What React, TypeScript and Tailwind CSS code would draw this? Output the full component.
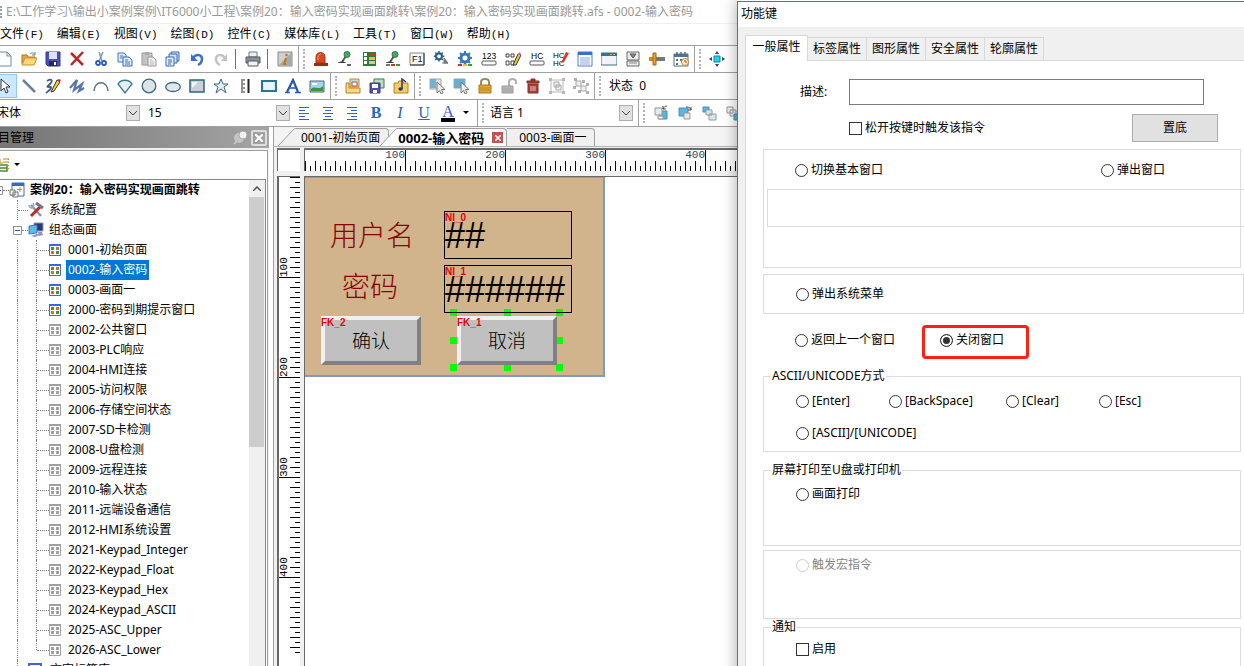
import type { ReactNode } from 'react';
import clsx from 'clsx';

const menus = [
  ['文件', 'F'],
  ['编辑', 'E'],
  ['视图', 'V'],
  ['绘图', 'D'],
  ['控件', 'C'],
  ['媒体库', 'L'],
  ['工具', 'T'],
  ['窗口', 'W'],
  ['帮助', 'H'],
];

const pages = [
  '0001-初始页面',
  '0002-输入密码',
  '0003-画面一',
  '2000-密码到期提示窗口',
  '2002-公共窗口',
  '2003-PLC响应',
  '2004-HMI连接',
  '2005-访问权限',
  '2006-存储空间状态',
  '2007-SD卡检测',
  '2008-U盘检测',
  '2009-远程连接',
  '2010-输入状态',
  '2011-远端设备通信',
  '2012-HMI系统设置',
  '2021-Keypad_Integer',
  '2022-Keypad_Float',
  '2023-Keypad_Hex',
  '2024-Keypad_ASCII',
  '2025-ASC_Upper',
  '2026-ASC_Lower',
];

const gear = (color: string) => (
  <>
    <circle cx="8" cy="7" r="4" fill="none" stroke={color} strokeWidth="3" />
    <path d="M8 0v3M8 11v3M1 7h3M12 7h3M3 2l2 2M11 10l2 2M13 2l-2 2M5 10l-2 2" stroke={color} strokeWidth="2" />
  </>
);

const lamps = (
  <>
    <path d="M1 14h4" stroke="#c83232" strokeWidth="2" />
    <path d="M6 14h4" stroke="#e8b830" strokeWidth="2" />
    <path d="M11 14h4" stroke="#3a9a3a" strokeWidth="2" />
  </>
);

const lever = (
  <>
    <path d="M9 5 5 11" stroke="#555" strokeWidth="2" />
    <circle cx="10" cy="3.500" r="3" fill="#4aa860" stroke="#2c7a40" />
    <path d="M1 12c0-2 8-2 8 0z" fill="#444" />
  </>
);

const arrowCursor = <path d="M8 4v11l2.500-2.500 1.500 3.500 2-1-1.500-3.500H16z" fill="#eee" stroke="#777" />;

const icons: Record<string, ReactNode> = {
  new: <path d="M2 1h8l4 4v10H2zM10 1v4h4" fill="#fff" stroke="#6a8aa8" />,
  open: (
    <>
      <path d="M1 13V4h5l1 2h7v3" fill="#e8a840" stroke="#a87820" />
      <path d="m1 14 3-7h12l-3 7z" fill="#fcd878" stroke="#c89030" />
      <path d="M9 3c2-2 4-1 5 1m0-3v3h-3" fill="none" stroke="#5a8a9a" />
    </>
  ),
  save: (
    <>
      <path d="M1 1h14v14H3l-2-2z" fill="#4a50b8" stroke="#343a90" />
      <path d="M4 1h8v7H4z" fill="#dce4f8" />
      <path d="M4 10h8v5H4z" fill="#222860" />
      <path d="M9 11h2v3H9z" fill="#fff" />
    </>
  ),
  remove: <path d="m2 2 12 12M14 1 2 14" stroke="#b82828" strokeWidth="2.500" />,
  cut: (
    <>
      <path d="m6 1 3 9M10 1 6 10" stroke="#7a98b8" strokeWidth="1.500" />
      <circle cx="5" cy="12" r="2" fill="none" stroke="#2858c0" strokeWidth="1.800" />
      <circle cx="11" cy="12" r="2" fill="none" stroke="#2858c0" strokeWidth="1.800" />
    </>
  ),
  copy: (
    <>
      <path d="M1 2h6l2 2v7H1z" fill="#dceafa" stroke="#4878b8" />
      <path d="M6 6h6l3 3v6H6z" fill="#dceafa" stroke="#3868b0" />
      <path d="M3 5h3M3 7h2M8 9h3M8 11h5M8 13h5" stroke="#4878b8" />
    </>
  ),
  paste: (
    <>
      <path d="M1 2h10v12H1z" fill="#c4c4c4" stroke="#999" />
      <path d="M4 1h4v3H4z" fill="#aaa" />
      <path d="M7 6h5l3 3v6H7z" fill="#eee" stroke="#999" />
      <path d="M9 9h2M9 11h4M9 13h4" stroke="#bbb" />
    </>
  ),
  copies: (
    <>
      <path d="M6 1h8v9H6z" fill="#cfe0f6" stroke="#3868b0" />
      <path d="M4 3h8v9H4z" fill="#cfe0f6" stroke="#3868b0" />
      <path d="M1 6h8v9H1z" fill="#e4effc" stroke="#3868b0" />
      <path d="M3 9h4M3 11h4M3 13h3" stroke="#3868b0" />
    </>
  ),
  undo: (
    <>
      <path d="M4 7c3-4 9-4 9 1 0 3-2 5-4 6" fill="none" stroke="#3a6ec8" strokeWidth="2.500" />
      <path d="M2 3v7h7z" fill="#3a6ec8" />
    </>
  ),
  redo: (
    <>
      <path d="M12 7c-3-4-9-4-9 1 0 3 2 5 4 6" fill="none" stroke="#c4c4c4" strokeWidth="2.500" />
      <path d="M14 3v7H8z" fill="#c4c4c4" />
    </>
  ),
  print: (
    <>
      <path d="M4 1h8v5H4z" fill="#e6f0f6" stroke="#778" />
      <path d="M1 6h14v6H1z" fill="#8a9098" stroke="#555a60" />
      <path d="M3 10h10v5H3z" fill="#f2f2f2" stroke="#555a60" />
    </>
  ),
  info: (
    <>
      <path d="M1 1h14v14H1z" fill="#d0d0d0" stroke="#888" />
      <path d="m2 14 12-12v12z" fill="#a8a8a8" />
      <path d="M9 7 7 13h2" fill="none" stroke="#c87810" strokeWidth="2" />
      <circle cx="9.500" cy="4" r="1.300" fill="#c87810" />
    </>
  ),
  alarm: (
    <>
      <path d="M3 12V6c0-6 9-6 9 0v6z" fill="#d84820" stroke="#b03010" />
      <path d="M5 9V6c0-2 2-3 3-3" fill="none" stroke="#f8a080" />
      <path d="M1 12h14v3H1z" fill="#903018" />
    </>
  ),
  lever: (
    <>
      {lever}
      <path d="M10 14h4" stroke="#666" strokeWidth="2" />
    </>
  ),
  table: (
    <>
      <path d="M2 1h13v14H2z" fill="#2e7a38" />
      <path d="M3 2h3v3H3zM3 6h3v3H3zM3 10h3v3H3z" fill="#fff" />
      <path d="M8 2h6v3H8z" fill="#d83020" />
      <path d="M8 6h6v3H8z" fill="#f0c030" />
      <path d="M8 10h6v3H8z" fill="#d8c8a0" />
    </>
  ),
  levers: (
    <>
      {lever}
      <path d="M11 14h4" stroke="#3a9a3a" strokeWidth="2" />
      <path d="M6 14h4" stroke="#c83232" strokeWidth="2" />
      <path d="M1 14h4" stroke="#777" strokeWidth="2" />
    </>
  ),
  f1: (
    <>
      <path d="M1 2h14v12H1z" fill="#f6f6f6" stroke="#888" />
      <path d="M1 14h14V2" fill="none" stroke="#333" />
      <text x="3" y="11" fontSize="9" fill="#111">F1</text>
    </>
  ),
  gearStep: (
    <>
      <g transform="scale(.75)">{gear('#2f628e')}</g>
      <path d="M11 7v5h4zM9 12h6" fill="#777" stroke="#777" />
    </>
  ),
  gearLamps: (
    <>
      {gear('#3a78b8')}
      {lamps}
    </>
  ),
  digits: (
    <>
      <text x="1" y="8" fontSize="8.500" fill="#000">123</text>
      <rect x="1" y="10" width="14" height="4" rx="1" fill="#fff" stroke="#555" />
    </>
  ),
  digitsPen: (
    <>
      <path d="M1 3h3v3H1zM6 3h3v3H6zM1 10h3v4H1zM6 10h3v4H6z" fill="#fff" stroke="#444" />
      <path d="m8 14 5-11 3 1-5 10z" fill="#f0d020" stroke="#333" />
      <path d="m12 4 3-3 1 3z" fill="#b868b8" />
    </>
  ),
  hc: (
    <>
      <text x="2" y="8" fontSize="8.500" fill="#000">HC</text>
      <rect x="1" y="10" width="14" height="4" rx="1" fill="#fff" stroke="#555" />
    </>
  ),
  hcPen: (
    <>
      <text x="0" y="7" fontSize="8" fill="#000">HC</text>
      <text x="0" y="15" fontSize="8" fill="#000">HC</text>
      <path d="m8 12 5-11 3 1-5 9z" fill="#d83828" />
    </>
  ),
  list: (
    <>
      <path d="M1 1h14v14H1z" fill="#fff" stroke="#4a80c8" />
      <path d="M1 1h14v3H1z" fill="#3a70c8" />
      <path d="M3 7h10M3 9h10M3 11h10M3 13h10" stroke="#88a8d8" />
    </>
  ),
  window: (
    <>
      <path d="M0 2h16v12H0z" fill="#eef4f8" stroke="#3a7088" />
      <path d="M0 2h16v3H0z" fill="#2d7894" />
      <path d="M9 3h2v1H9zM12 3h2v1h-2z" fill="#f0a040" />
    </>
  ),
  drop: (
    <>
      <path d="M2 1h12v8H2zM2 10h12v5H2z" fill="#eee" stroke="#666" />
      <path d="M5 3h6L8 7z" fill="#888" stroke="#555" />
      <path d="M4 12h8" stroke="#888" />
    </>
  ),
  slider: (
    <>
      <path d="M0 6h16v4H0z" fill="#777" />
      <path d="M0 6h5v4H0z" fill="#d88820" />
      <path d="M4 2h3v12H4z" fill="#e8a030" stroke="#a06810" />
    </>
  ),
  calendar: (
    <>
      <path d="M1 3h14v12H1z" fill="#fff" stroke="#50748c" />
      <path d="M1 3h14v3H1z" fill="#50748c" />
      <path d="M4 1v3M8 1v3M12 1v3" stroke="#50748c" strokeWidth="1.500" />
      <path d="M3 8h2v2H3zM7 8h2v2H7zM3 12h2v2H3z" fill="#50748c" />
      <circle cx="12" cy="11" r="3.500" fill="#fce8c8" stroke="#c88830" />
      <path d="M12 9v2h2" fill="none" stroke="#a06020" />
    </>
  ),
  move: (
    <>
      <path d="M5 5h6v6H5z" fill="#18d8e8" stroke="#1878a8" />
      <path d="m8 0 2 3H6zM8 16l2-3H6zM0 8l3-2v4zM16 8l-3-2v4z" fill="#284868" />
    </>
  ),
  group: (
    <>
      <circle cx="8" cy="4" r="4" fill="#48a0d0" />
      <path d="M5 8h6l-1 7H6z" fill="#7848a8" />
    </>
  ),
  pointer: <path d="M4 1v12l3-3 2 5 2-1-2-5h4z" fill="#fff" stroke="#333" />,
  line: <path d="m2 2 12 12" stroke="#6a82a0" strokeWidth="2.500" />,
  freehand: (
    <>
      <path d="M2 3c5-3 6 0 3 3s-4 3 0 3-3 5-4 6" fill="none" stroke="#3f5b86" strokeWidth="1.800" />
      <path d="m6 14 6-12 3 2-6 9z" fill="#f0d828" stroke="#333" />
      <path d="m12 2 2-1 2 1-1 2z" fill="#c83040" />
    </>
  ),
  polyline: <path d="M1 10 8 2 5 12l8-6-3 7 5-3" fill="none" stroke="#5878a8" strokeWidth="2.200" />,
  arc: <path d="M1 13c1-11 13-11 14 0" fill="none" stroke="#5a6e88" strokeWidth="1.500" />,
  pie: <path d="M1 6c3-5 11-5 14 0l-7 9z" fill="#e8eef2" stroke="#3a7890" strokeWidth="1.300" />,
  circle: <circle cx="8" cy="8" r="6.800" fill="#dce4e8" stroke="#3a6a80" strokeWidth="1.300" />,
  ellipse: <ellipse cx="8" cy="9" rx="7.300" ry="4.500" fill="#e0e6ea" stroke="#3a6a80" strokeWidth="1.300" />,
  rect: (
    <>
      <path d="M1 2h14v12H1z" fill="#c8d0d6" stroke="#2e6480" strokeWidth="1.500" />
      <path d="M3 4h6l-6 6z" fill="#f2f4f6" />
    </>
  ),
  star: <path d="m8 1 2 5h5l-4 3 2 6-5-4-5 4 2-6-4-3h5z" fill="#e4ecf0" stroke="#3a6a80" />,
  scale: (
    <>
      <path d="M4 2h4M4 4h2M4 6h4M4 8h2M4 10h4M4 12h2M4 14h4" stroke="#222" />
      <path d="M11.500 1v14" stroke="#222" strokeWidth="2" />
    </>
  ),
  frame: <path d="M1 3h14v10H1z" fill="#e8f4fa" stroke="#2a7498" strokeWidth="2.200" />,
  text: (
    <>
      <path d="m2 14 6-12 5 12" fill="none" stroke="#2858a8" strokeWidth="2.200" />
      <path d="M4 10h7M0 14.500h5M10 14.500h6" stroke="#2858a8" strokeWidth="1.500" />
    </>
  ),
  image: (
    <>
      <path d="M1 3h14v11H1z" fill="#a8d4ee" stroke="#4a6a80" />
      <path d="M2 11c4-4 7 2 12-3v5H2z" fill="#3f9440" />
      <path d="M3 5h5v2H3z" fill="#fff" />
    </>
  ),
  gallery: (
    <>
      <path d="M5 1h9v8H5z" fill="#b8dcf0" stroke="#c88820" />
      <path d="M1 5h3v5h11v5H1z" fill="#f8d880" stroke="#b88020" />
      <path d="M7 4h5v4H7z" fill="#fff" stroke="#c05030" />
    </>
  ),
  gallerySave: (
    <>
      <path d="M5 1h10v9H5z" fill="#b8e0c0" stroke="#3a7a50" />
      <path d="M1 5h10v10H1z" fill="#5050b0" stroke="#383890" />
      <path d="M3 6h6v4H3zM4 12h4v3H4z" fill="#fff" />
    </>
  ),
  music: (
    <>
      <path d="M1 5h4l1-2h4v2h5v10H1z" fill="#f4cc60" stroke="#b88020" />
      <path d="M9 11V1l4 3" fill="none" stroke="#283878" strokeWidth="1.500" />
      <ellipse cx="7.500" cy="11" rx="2.200" ry="1.800" fill="#283878" />
    </>
  ),
  pick: (
    <>
      <path d="M1 1h11v10H1z" fill="#e2e6ea" stroke="#a0a0a0" />
      <path d="M1 1h6v9H1z" fill="#78b0d0" />
      {arrowCursor}
    </>
  ),
  pickAll: (
    <>
      <path d="M1 1h11v9H1z" fill="#68aed0" stroke="#88a8b8" />
      {arrowCursor}
    </>
  ),
  lock: (
    <>
      <path d="M4 8V4c0-4 8-4 8 0v4" fill="none" stroke="#9a8a60" strokeWidth="2" />
      <path d="M2 7h12v8H2z" fill="#e0a830" stroke="#a87818" />
      <path d="M3 10h10M3 12h10" stroke="#c08820" />
    </>
  ),
  unlock: (
    <>
      <path d="M8 8V4c0-4 7-4 7 0v2" fill="none" stroke="#b0b0b0" strokeWidth="2" />
      <path d="M1 8h11v7H1z" fill="#b8b8b8" stroke="#999" />
      <path d="M2 11h9M2 13h9" stroke="#a4a4a4" />
    </>
  ),
  trash: (
    <>
      <path d="M2 3h12v2H2zM6 1h4v2H6z" fill="#b04038" stroke="#803028" />
      <path d="M3 6h10v9H3z" fill="#a84038" stroke="#803028" />
      <path d="M6 8v5M8 8v5M10 8v5" stroke="#f0c0b8" />
    </>
  ),
  bind: (
    <>
      <path d="M2 2h12v12H2z" fill="none" stroke="#b8b8b8" />
      <path d="M5 4h5v5H5zM7 7h5v5H7z" fill="#eee" stroke="#aaa" />
      <path d="M0 0h3v3H0zM13 0h3v3h-3zM0 13h3v3H0zM13 13h3v3h-3z" fill="#b8b8b8" />
    </>
  ),
  unbind: (
    <>
      <path d="M3 3h5v5H3zM8 8h5v5H8z" fill="#eee" stroke="#aaa" />
      <path d="M1 0h3v3H1zM9 2h3v3H9zM0 8h3v3H0zM5 12h3v3H5zM13 5h3v3h-3zM13 13h3v3h-3z" fill="#b0b0b0" />
    </>
  ),
  left: <path d="M3 2.500h10M3 5.500h6M3 8.500h10M3 11.500h6M3 14.500h10" stroke="#2f5fd0" />,
  center: <path d="M3 2.500h10M5 5.500h6M3 8.500h10M5 11.500h6M3 14.500h10" stroke="#2f5fd0" />,
  right: <path d="M3 2.500h10M7 5.500h6M3 8.500h10M7 11.500h6M3 14.500h10" stroke="#2f5fd0" />,
  toFront: (
    <>
      <path d="M6 6h8v8H6z" fill="#58b4e0" stroke="#4890b8" />
      <path d="M2 3h7v7H2z" fill="#e8e8e8" stroke="#999" />
      <path d="M5 11h5v3H5z" fill="#eee" stroke="#999" />
      <path d="M14 1c-2 0-3 1-4 3m0-3v3h3" fill="none" stroke="#444" />
    </>
  ),
  toBack: (
    <>
      <path d="M2 3h9v8H2z" fill="#58b4e0" stroke="#4890b8" />
      <path d="M7 8h6v6H7z" fill="#e8e8e8" stroke="#999" />
      <path d="M9 2c2 0 4 0 5 3m0-3v3h-3" fill="none" stroke="#444" />
    </>
  ),
  forward: (
    <>
      <path d="M2 2h6v5H2z" fill="#58b4e0" stroke="#4890b8" />
      <path d="M5 5h6v5H5zM8 9h7v6H8z" fill="#d4e8f2" stroke="#999" />
    </>
  ),
  backward: (
    <>
      <path d="M2 2h6v6H2zM5 5h6v6H5z" fill="#f0f0f0" stroke="#999" />
      <path d="M9 9h6v6H9z" fill="#58b4e0" stroke="#4890b8" />
    </>
  ),
};

const Icon = ({ name }: { name: string }) => (
  <svg viewBox="0 0 16 16" className="size-4 shrink-0" fill="none" fontFamily="Liberation Sans, sans-serif">
    {icons[name]}
  </svg>
);

const Tool = ({ name, active }: { name: string; active?: boolean }) => (
  <button
    aria-label={name}
    className={clsx(
      'flex h-6 w-6 shrink-0 items-center justify-center',
      active && 'border border-[#90c8f6] bg-[#cce8ff]',
    )}
  >
    <Icon name={name} />
  </button>
);

const Tools = ({ names }: { names: string[] }) => (
  <>
    {names.map((n) => (
      <Tool key={n} name={n} />
    ))}
  </>
);

const Divider = () => <span className="mr-[5px] ml-[2px] h-5 w-px shrink-0 bg-gray-500" />;

// Edge of one toolbar and the grip of the next
const Grip = () => (
  <span className="ml-px flex h-full w-[11px] shrink-0 items-center justify-center border-l border-[#a0a0a0]">
    <span className="h-5 border-l-2 border-dotted border-[#b4b4b4]" />
  </span>
);

const Combo = ({ label, value, className }: { label: string; value: string; className: string }) => (
  <label className={clsx('relative flex h-6 shrink-0 items-center', className)}>
    <select aria-label={label} className="w-full appearance-none bg-transparent">
      <option>{value}</option>
    </select>
    <span className="pointer-events-none absolute right-0 flex h-4 w-[14px] items-center justify-center border border-[#adadad] bg-[#e1e1e1]">
      <svg viewBox="0 0 8 5" className="w-2" fill="none" stroke="#444">
        <path d="m0 0 4 4 4-4" />
      </svg>
    </span>
  </label>
);

const Bar = ({ children }: { children: ReactNode }) => (
  <div className="flex h-[27px] items-center overflow-hidden border-b border-[#a0a0a0]">{children}</div>
);

const Toolbars = () => (
  <div className="border-t border-[#a0a0a0]">
    <Bar>
      <div className="-ml-[7px] flex h-full shrink-0 items-center">
        <Tools names={['new', 'open', 'save', 'remove', 'cut', 'copy', 'paste', 'copies', 'undo', 'redo']} />
        <Divider />
        <Tool name="print" />
        <Divider />
        <Tool name="info" />
      </div>
      <Grip />
      <Tools
        names={['alarm', 'lever', 'table', 'levers', 'f1', 'gearStep', 'gearLamps', 'digits', 'digitsPen', 'hc', 'hcPen', 'list', 'window', 'drop', 'slider', 'calendar']}
      />
      <Grip />
      <Tools names={['move', 'group']} />
    </Bar>
    <Bar>
      <div className="-ml-[7px] flex h-full shrink-0 items-center">
        <Tool name="pointer" active />
        <Tools
          names={['line', 'freehand', 'polyline', 'arc', 'pie', 'circle', 'ellipse', 'rect', 'star', 'scale', 'frame', 'text', 'image']}
        />
      </div>
      <Grip />
      <Tools names={['gallery', 'gallerySave', 'music']} />
      <Grip />
      <Tools names={['pick', 'pickAll', 'lock', 'unlock', 'trash', 'bind', 'unbind']} />
      <Grip />
      <span className="shrink-0 pl-1">状态&nbsp; 0</span>
    </Bar>
    <Bar>
      <Combo label="字体" value="宋体" className="-ml-[3px] w-[143px]" />
      <Combo label="字号" value="15" className="ml-2 w-[142px]" />
      <div className="ml-[2px] flex shrink-0">
        <Tools names={['left', 'center', 'right']} />
        <button className="h-6 w-6 font-['Liberation_Serif',serif] text-[16px] leading-6 font-bold text-[#2f5fd0]">B</button>
        <button className="h-6 w-6 font-['Liberation_Serif',serif] text-[16px] leading-6 text-[#2f5fd0] italic">I</button>
        <button className="h-6 w-6 font-['Liberation_Serif',serif] text-[16px] leading-6 text-[#2f5fd0] underline">U</button>
        <button className="flex h-6 w-10 items-center gap-2 pl-[5px]" aria-label="颜色">
          <span className="flex w-[14px] flex-col items-center border-b-4 border-black font-['Liberation_Serif',serif] text-[16px] leading-[13px] text-[#2f5fd0]">
            A
          </span>
          <svg viewBox="0 0 6 4" className="w-[6px]">
            <path d="M0 0h6L3 3z" />
          </svg>
        </button>
      </div>
      <Grip />
      <Combo label="语言" value="语言 1" className="mr-1 ml-[2px] w-[143px]" />
      <Grip />
      <Tools names={['toFront', 'toBack', 'forward', 'backward']} />
    </Bar>
  </div>
);

const dots = 'border-dotted border-[#808080]';

const Branch = ({ last, wide }: { last?: boolean; wide?: boolean }) => (
  <span className={clsx('flex h-5 shrink-0', wide ? 'w-[13px]' : 'w-[11px]')}>
    <span className={clsx('border-l', dots, last ? 'h-[10px]' : 'h-5')} />
    <span className={clsx('mt-[10px] h-px flex-1 border-t', dots)} />
  </span>
);

const PageIcon = ({ active }: { active: boolean }) => (
  <svg viewBox="0 0 12 12" className="size-3 shrink-0">
    <path d="M.5.5h11v11H.5z" fill="#fff" stroke={active ? '#3a68d8' : '#a0a0a0'} />
    <path d="M0 0h12v2H0z" fill={active ? '#3a68d8' : '#a0a0a0'} />
    <path d="M2 3h3v3H2zM7 7h3v3H7z" fill={active ? '#5a8a20' : '#a0a0a0'} />
    <path d="M7 3h3v3H7zM2 7h3v3H2z" fill={active ? '#b87828' : '#a0a0a0'} />
  </svg>
);

const Minus = () => (
  <svg viewBox="0 0 9 9" className="size-[9px] shrink-0">
    <path d="M.5.5h8v8h-8z" fill="#fff" stroke="#919191" />
    <path d="M2 4.500h5" stroke="#3858a8" />
  </svg>
);

const Tree = () => (
  <div className="flex min-h-0 flex-1 border-t border-r border-[#828790]">
    <ul className="min-w-0 flex-1 overflow-hidden leading-5 whitespace-nowrap">
      <li className="-ml-[6px] flex items-center font-bold">
        <Minus />
        <span className={clsx('w-[6px] border-t', dots)} />
        <svg viewBox="0 0 16 16" className="mr-[5px] size-4 shrink-0">
          <path d="M3 1h12v13H3z" fill="#fff" stroke="#3a68c8" />
          <path d="M3 1h12v3H3z" fill="#3a68c8" />
          <path d="M11 5v5M8 7.500h5" stroke="#c09030" />
          <path d="M1 8h5v5H1zM4 10h5v5H4z" fill="#f4f4f4" stroke="#777" />
        </svg>
        案例20：输入密码实现画面跳转
      </li>
      <li className="flex items-center pl-[17px]">
        <Branch />
        <svg viewBox="0 0 16 16" className="mr-[5px] size-4 shrink-0" fill="none">
          <path d="m3 3 10 11" stroke="#8a98a4" strokeWidth="2.500" />
          <path d="M1 3c0 3 3 4 5 2M5 1c1 1 1 3 0 4" stroke="#9aa8b4" strokeWidth="1.500" />
          <path d="m12 5-9 9" stroke="#c02828" strokeWidth="3" />
          <path d="m8 1 7 5" stroke="#6a7884" strokeWidth="3" />
        </svg>
        系统配置
      </li>
      <li className="flex items-center pl-[13px]">
        <Minus />
        <span className={clsx('w-[6px] border-t', dots)} />
        <svg viewBox="0 0 16 16" className="mr-[5px] size-4 shrink-0">
          <path d="M6 1h9v8H6z" fill="#28387c" stroke="#8898b8" />
          <path d="m1 4 8-1v8l-8 1z" fill="#58b8f0" stroke="#4878a8" />
          <path d="m3 14 6-2 3 1-5 2zM10 10l4 0 1 3-4 1z" fill="#8a94c0" />
        </svg>
        组态画面
      </li>
      {pages.map((page, i) => (
        <li key={page} className="flex items-center pl-[17px]">
          <span className={clsx('h-5 w-[19px] shrink-0 border-l', dots)} />
          <Branch wide last={i === pages.length - 1} />
          <PageIcon active={i < 4} />
          <a href="#" className={clsx('ml-[5px] px-[2px]', i === 1 && 'bg-[#0078d7] text-white')}>
            {page}
          </a>
        </li>
      ))}
      <li className="flex items-center pl-[17px]">
        <Branch />
        <svg viewBox="0 0 14 14" className="mr-2 size-[14px] shrink-0">
          <path d="M1 1h12v12H1z" fill="#fff" stroke="#3a68d8" strokeWidth="2" />
        </svg>
        文字标签库
      </li>
    </ul>
    <div className="w-4 shrink-0 bg-[#f0f0f0] pr-px">
      <div className="flex h-[17px] items-center justify-center">
        <svg viewBox="0 0 8 5" className="w-2" fill="none" stroke="#505050" strokeWidth="1.500">
          <path d="m0 5 4-4 4 4" />
        </svg>
      </div>
      <div className="h-[250px] bg-[#cdcdcd]" />
    </div>
  </div>
);

const ProjectPanel = () => (
  <aside className="flex w-[269px] shrink-0 flex-col bg-[#f0f0f0]">
    <header className="flex h-[21px] items-center bg-linear-to-r from-[#757575] to-[#a4a4a4] pr-[2px]">
      <h2 className="-ml-[2px] flex-1">目管理</h2>
      <button aria-label="固定" className="mr-1">
        <svg viewBox="0 0 14 14" className="size-[14px]">
          <path d="m1 13 4-4" stroke="#ccc" strokeWidth="1.500" />
          <circle cx="6" cy="7" r="5" fill="#c4c4c4" />
          <circle cx="10" cy="4" r="4" fill="#f2f2f2" stroke="#aaa" />
        </svg>
      </button>
      <button aria-label="关闭" className="flex size-4 items-center justify-center rounded-xs border-2 border-[#ddd]">
        <svg viewBox="0 0 8 8" className="size-2" stroke="#fff" strokeWidth="2">
          <path d="m0 0 8 8M8 0 0 8" />
        </svg>
      </button>
    </header>
    <div className="mt-[2px] mr-px flex min-h-0 flex-1 flex-col border-t border-r border-[#a0a0a0] bg-white pr-px">
      <div className="flex h-[28px] items-center gap-[5px]">
        <svg viewBox="0 0 9 14" className="h-[14px] w-[9px]" fill="none">
          <path d="M0 1v4h3M3 1h6M3 4h6" stroke="#c08a20" />
          <path d="M0 7h7v6H0M0 10h7" stroke="#4a8a30" strokeWidth="1.500" />
          <path d="M8.500 1v12" stroke="#c08a20" strokeDasharray="1 2" />
        </svg>
        <svg viewBox="0 0 6 4" className="w-[6px]">
          <path d="M0 0h6L3 3z" />
        </svg>
      </div>
      <Tree />
    </div>
  </aside>
);

const steps = Array.from({ length: 400 }, (_, i) => i * 5);

const tickSize = (v: number) => (v > 0 && v % 100 === 0 ? 21 : v % 10 === 0 ? 10 : 5);

const TopRuler = () => (
  <svg className="block h-[21px] w-full bg-white font-['Liberation_Mono',monospace] text-[11px]">
    {steps.map((v) => (
      <rect key={v} x={v} y={21 - tickSize(v)} width="1" height={tickSize(v)} />
    ))}
    {steps.filter((v) => v && v % 100 === 0).map((v) => (
      <text key={v} x={v} y="8" textAnchor="end" fill="#2a3f60">
        {v}
      </text>
    ))}
  </svg>
);

const SideRuler = () => (
  <svg className="block h-[476px] w-full font-['Liberation_Mono',monospace] text-[11px]">
    {steps.map((v) => (
      <rect key={v} y={v} x={21 - tickSize(v)} height="1" width={tickSize(v)} />
    ))}
    {steps.filter((v) => v && v % 100 === 0).map((v) => (
      <text key={v} transform={`translate(8 ${v}) rotate(-90)`}>
        {v}
      </text>
    ))}
  </svg>
);

const Slope = ({ fill }: { fill: string }) => (
  <svg viewBox="0 0 18 18" className="-mr-px h-[18px] w-[18px] shrink-0">
    <path d="M0 18 15 2q1-1.500 3-1.500V18z" fill={fill} />
    <path d="M0 18 15 2q1-1.500 3-1.500" fill="none" stroke="#a0a0a0" />
  </svg>
);

const tabBody = 'flex h-[18px] items-center rounded-tr-sm border-t border-r border-[#a0a0a0]';

const DocTabs = () => (
  <div className="flex h-5 items-end border-b border-[#b4b4b4] bg-[#f4f4f4] pl-1 whitespace-nowrap">
    <button className="flex">
      <Slope fill="#f0f0f0" />
      <span className={clsx(tabBody, 'bg-[#f0f0f0] pr-2 pl-[6px]')}>0001-初始页面</span>
    </button>
    <div className="relative -ml-[9px] flex">
      <Slope fill="#ffffff" />
      <span className={clsx(tabBody, 'gap-2 bg-white pr-[3px] pl-px font-bold')}>
        <button className="text-[13px]">0002-输入密码</button>
        <button aria-label="关闭" className="flex h-[11px] w-[11px] items-center justify-center bg-[#c75050]">
          <svg viewBox="0 0 6 6" className="size-[6px]" stroke="#fff" strokeWidth="1.500">
            <path d="m0 0 6 6M6 0 0 6" />
          </svg>
        </button>
      </span>
    </div>
    <button className={clsx(tabBody, 'bg-[#f0f0f0] pr-[7px] pl-3')}>0003-画面一</button>
  </div>
);

const NumberInput = ({ tag, value, className }: { tag: string; value: string; className: string }) => (
  <div className={clsx('absolute h-12 w-32 border border-black', className)}>
    <span className="absolute top-0 left-0 font-['Liberation_Sans',sans-serif] text-[10px] leading-3 font-bold text-red-600">
      {tag}
    </span>
    <span className="block font-['Liberation_Sans',sans-serif] text-[36px] leading-[48px]">{value}</span>
  </div>
);

const KeyButton = ({ tag, label, className }: { tag: string; label: string; className: string }) => (
  <button
    className={clsx(
      'absolute h-[49px] w-[100px] border-4 border-t-[#f0f0f0] border-r-[#808080] border-b-[#808080] border-l-[#f0f0f0] bg-[#c0c0c0] text-[19px] leading-5 font-light',
      className,
    )}
  >
    <span className="absolute -top-[3px] -left-1 font-['Liberation_Sans',sans-serif] text-[10px] leading-3 font-bold text-red-600">
      {tag}
    </span>
    {label}
  </button>
);

const handles = [
  'top-[131px] left-[145px]',
  'top-[131px] left-[199px]',
  'top-[131px] left-[251px]',
  'top-[159px] left-[145px]',
  'top-[159px] left-[251px]',
  'top-[186px] left-[145px]',
  'top-[186px] left-[199px]',
  'top-[186px] left-[251px]',
];

const Screen = () => (
  <div className="relative h-[200px] w-[300px] border-t border-r-2 border-b-2 border-[#7b9cc0] bg-[#d2b48c]">
    {handles.map((h) => (
      <span key={h} className={clsx('absolute size-[7px] bg-[#00ff00]', h)} />
    ))}
    <p className="absolute top-[39px] left-[25px] text-[28px] leading-9 font-light text-[#8b0000]">用户名</p>
    <p className="absolute top-[90px] left-[37px] text-[28px] leading-9 font-light text-[#8b0000]">密码</p>
    <NumberInput tag="NI_0" value="##" className="top-[33px] left-[139px]" />
    <NumberInput tag="NI_1" value="######" className="top-[87px] left-[139px]" />
    <KeyButton tag="FK_2" label="确认" className="top-[138px] left-[16px]" />
    <KeyButton tag="FK_1" label="取消" className="top-[138px] left-[152px]" />
  </div>
);

const Editor = () => (
  <section className="ml-1 flex min-w-0 flex-1 flex-col border-l border-[#a0a0a0] bg-[#f0f0f0]">
    <DocTabs />
    <div className="grid min-h-0 flex-1 grid-cols-[23px_minmax(0,1fr)] grid-rows-[23px_minmax(0,1fr)] gap-x-[4px] gap-y-[5px] pt-px pl-[3px]">
      <div className="border-t-2 border-l border-[#696969] bg-white" />
      <div className="border-t-2 border-l border-[#696969]">
        <TopRuler />
      </div>
      <div className="border-t border-l-2 border-[#696969] bg-white">
        <SideRuler />
      </div>
      <div className="overflow-hidden border-t border-l border-[#696969] bg-white">
        <Screen />
      </div>
    </div>
  </section>
);

const Workbench = () => (
  <div className="flex min-w-0 flex-col bg-white">
    <h1 className="flex h-6 items-center border-b border-[#f0f0f0] whitespace-nowrap text-[#999]">
      <span className="mr-1 h-3 w-[2px] border-l-2 border-dotted border-gray-400" />
      E:\工作学习\输出小案例案例\IT6000小工程\案例20：输入密码实现画面跳转\案例20：输入密码实现画面跳转.afs - 0002-输入密码
    </h1>
    <nav className="flex h-[21px] items-center gap-[13px] whitespace-nowrap">
      {menus.map(([name, key]) => (
        <button key={key} className="leading-5">
          {name}
          <span className="font-['Liberation_Mono',monospace] text-[11px]">({key})</span>
        </button>
      ))}
    </nav>
    <Toolbars />
    <div className="flex min-h-0 flex-1">
      <ProjectPanel />
      <Editor />
    </div>
  </div>
);

type OptionProps = { label: string; type?: 'radio' | 'checkbox'; checked?: boolean; disabled?: boolean };

const Option = ({ label, type = 'radio', checked, disabled }: OptionProps) => (
  <label className={clsx('flex h-4 items-center gap-[3px] whitespace-nowrap', disabled && 'text-[#838383]')}>
    <input
      type={type}
      name={type === 'radio' ? 'action' : undefined}
      defaultChecked={checked}
      disabled={disabled}
      className={clsx(
        'size-[13px] shrink-0 appearance-none border bg-white checked:bg-[#333] checked:shadow-[inset_0_0_0_2px_#fff]',
        type === 'radio' && 'rounded-full',
        disabled ? 'border-[#ccc]' : 'border-[#333]',
      )}
    />
    {label}
  </label>
);

const box = 'border border-[#dcdcdc]';

const dialogTabs = ['标签属性', '图形属性', '安全属性', '轮廓属性'];

const KeyDialog = () => (
  <section
    role="dialog"
    aria-label="功能键"
    className="relative mt-px flex min-w-0 flex-col overflow-hidden border-t border-l border-[#1883d7] bg-[#f0f0f0] whitespace-nowrap"
  >
    <h2 className="h-[25px] bg-white pl-[3px] leading-6">功能键</h2>
    <div className="mt-2 ml-[7px] flex items-end">
      <button className="z-10 -mb-px h-[26px] w-[63px] border border-b-0 border-[#d9d9d9] bg-white pb-1">一般属性</button>
      {dialogTabs.map((t) => (
        <button key={t} className="h-[23px] w-[59px] border-t border-r border-[#d9d9d9]">
          {t}
        </button>
      ))}
    </div>
    <div className="ml-[7px] flex min-h-0 flex-1 flex-col overflow-hidden border-t border-l border-[#d9d9d9] bg-white pl-[17px]">
      <div className="mt-[18px] flex items-center pr-10">
        <label htmlFor="description" className="w-[86px] shrink-0 pl-[37px]">
          描述:
        </label>
        <input id="description" className="h-[26px] min-w-0 flex-1 border border-[#7a7a7a] bg-white px-1" />
      </div>
      <div className="mt-[9px] flex items-center justify-between pr-[26px] pl-[86px]">
        <Option type="checkbox" label="松开按键时触发该指令" />
        <button className="h-7 w-[86px] border border-[#adadad] bg-[#e1e1e1]">置底</button>
      </div>

      <div className={clsx(box, 'mt-[7px] mr-[3px] h-[119px] shrink-0')}>
        <div className="mt-3 flex justify-between pr-[75px] pl-[31px]">
          <Option label="切换基本窗口" />
          <Option label="弹出窗口" />
        </div>
        <div className={clsx(box, 'mt-[11px] -mr-3 ml-[3px] h-[38px]')} />
      </div>

      <div className={clsx(box, 'mt-[6px] shrink-0 py-[11px] pl-8')}>
        <Option label="弹出系统菜单" />
      </div>

      <div className="mt-[11px] flex items-start gap-[27px] pl-8">
        <div className="pt-[7px]">
          <Option label="返回上一个窗口" />
        </div>
        <div className="rounded-sm border-3 border-[#ff2010] pt-1 pr-[22px] pb-2 pl-[15px]">
          <Option label="关闭窗口" checked />
        </div>
      </div>

      <fieldset className={clsx(box, 'mt-[9px] mr-[3px] pb-[10px] pl-8')}>
        <legend className="-ml-[25px] px-px leading-4">ASCII/UNICODE方式</legend>
        <div className="mt-[9px] grid grid-cols-[93px_117px_93px_auto] gap-y-4">
          <Option label="[Enter]" />
          <Option label="[BackSpace]" />
          <Option label="[Clear]" />
          <Option label="[Esc]" />
          <Option label="[ASCII]/[UNICODE]" />
        </div>
      </fieldset>

      <fieldset className={clsx(box, 'mt-[10px] mr-[3px] pt-2 pb-[43px] pl-8')}>
        <legend className="-ml-[25px] px-px leading-4">屏幕打印至U盘或打印机</legend>
        <Option label="画面打印" />
      </fieldset>

      <div className={clsx(box, 'mt-1 mr-[3px] pt-[6px] pb-[45px] pl-8')}>
        <Option label="触发宏指令" disabled />
      </div>

      <fieldset className={clsx(box, 'mr-[3px] shrink-0 pt-[6px] pb-10 pl-8')}>
        <legend className="-ml-[25px] px-px leading-4">通知</legend>
        <Option type="checkbox" label="启用" />
      </fieldset>
    </div>
  </section>
);

const App = () => (
  <main className="grid h-screen grid-cols-[minmax(0,737fr)_minmax(0,507fr)] overflow-hidden font-['Noto_Sans','Noto_Sans_CJK_SC',sans-serif] text-[12px] leading-4 text-black">
    <Workbench />
    <div className="z-10 flex min-w-0 flex-col shadow-[0_0_14px_rgba(0,0,0,0.35)] *:flex-1">
      <KeyDialog />
    </div>
  </main>
);

export default App;
